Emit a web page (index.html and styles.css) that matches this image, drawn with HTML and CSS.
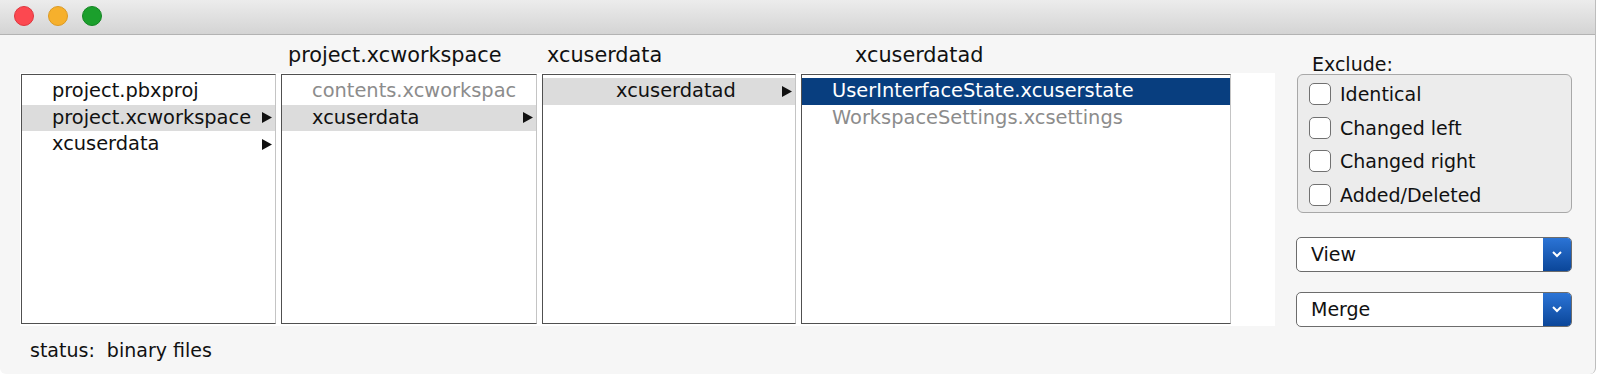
FILE: index.html
```html
<!DOCTYPE html>
<html lang="en">
<head>
    <meta charset="UTF-8">
    <meta name="viewport" content="width=device-width, initial-scale=1.0">
    <title>Directory Diff</title>
    <link rel="stylesheet" href="styles.css">
</head>
<body>
<div class="window">
    <div class="titlebar">
        <span class="light red"></span>
        <span class="light yellow"></span>
        <span class="light green"></span>
    </div>
    <div class="content">
        <div class="browser">
            <div class="headers">
                <div class="head"></div>
                <div class="head head-first">project.xcworkspace</div>
                <div class="head">xcuserdata</div>
                <div class="head head-wide">xcuserdatad</div>
            </div>
            <div class="lists">
                <div class="list">
                    <div class="item">project.pbxproj</div>
                    <div class="item hover">project.xcworkspace
                        <svg class="arrow" width="10" height="11" viewBox="0 0 10 11"><polygon points="0,0 10,5.5 0,11"/></svg>
                    </div>
                    <div class="item">xcuserdata
                        <svg class="arrow" width="10" height="11" viewBox="0 0 10 11"><polygon points="0,0 10,5.5 0,11"/></svg>
                    </div>
                </div>
                <div class="list">
                    <div class="item muted">contents.xcworkspac</div>
                    <div class="item hover">xcuserdata
                        <svg class="arrow" width="10" height="11" viewBox="0 0 10 11"><polygon points="0,0 10,5.5 0,11"/></svg>
                    </div>
                </div>
                <div class="list">
                    <div class="item hover indent">xcuserdatad
                        <svg class="arrow" width="10" height="11" viewBox="0 0 10 11"><polygon points="0,0 10,5.5 0,11"/></svg>
                    </div>
                </div>
                <div class="list">
                    <div class="item selected">UserInterfaceState.xcuserstate</div>
                    <div class="item muted">WorkspaceSettings.xcsettings</div>
                </div>
            </div>
            <div class="status">status:  binary files</div>
        </div>

        <div class="sidebar">
            <div class="group-title">Exclude:</div>
            <div class="group">
                <label class="check"><span class="box"></span>Identical</label>
                <label class="check"><span class="box"></span>Changed left</label>
                <label class="check"><span class="box"></span>Changed right</label>
                <label class="check"><span class="box"></span>Added/Deleted</label>
            </div>
            <div class="popup">
                <span class="popup-label">View</span>
                <span class="popup-arrow">
                    <svg width="10" height="7" viewBox="0 0 10 7"><polyline points="1,1 5,5 9,1" fill="none" stroke="#fff" stroke-width="2"/></svg>
                </span>
            </div>
            <div class="popup popup-merge">
                <span class="popup-label">Merge</span>
                <span class="popup-arrow">
                    <svg width="10" height="7" viewBox="0 0 10 7"><polyline points="1,1 5,5 9,1" fill="none" stroke="#fff" stroke-width="2"/></svg>
                </span>
            </div>
        </div>
    </div>
</div>
</body>
</html>
```

FILE: styles.css
```css
body {
    margin: 0;
    background: #ffffff;
    font-family: "DejaVu Sans", sans-serif;
    font-size: 19.4px;
    color: #111;
}
.window {
    width: 1596px;
    height: 374px;
    box-sizing: border-box;
    background: #f6f6f6;
    border-right: 1px solid #bdbdbd;
    border-radius: 0 0 6px 6px;
    overflow: hidden;
}

/* title bar */
.titlebar {
    height: 35px;
    box-sizing: border-box;
    border-bottom: 1px solid #b3b3b3;
    background: linear-gradient(#ececec, #d4d4d4);
    display: flex;
    align-items: center;
    gap: 14px;
    padding: 0 0 2px 14px;
}
.light {
    width: 20px;
    height: 20px;
    box-sizing: border-box;
    border-radius: 50%;
}
.red { background: #fc4850; border: 1px solid #de363e; }
.yellow { background: #f6b02c; border: 1px solid #dc9a23; }
.green { background: #1b9f2c; border: 1px solid #148523; }

.content {
    display: flex;
}

/* column browser */
.browser {
    margin-left: 20px;
    width: 1255px;
}
.headers, .lists {
    display: grid;
    grid-template-columns: 255px 256px 254px 430px;
    column-gap: 5px;
}
.headers {
    height: 38px;
    padding: 2px 0 0 1px;
    box-sizing: border-box;
    align-items: center;
    font-size: 20.8px;
}
.head {
    padding-left: 5px;
}
.head-first {
    padding-left: 7px;
}
.head-wide {
    padding-left: 54px;
}
.lists {
    height: 253px;
    box-sizing: border-box;
    padding: 1px 0 0 1px;
    background: #fff;
}
.list {
    height: 250px;
    box-sizing: border-box;
    border: 1px solid #505050;
    border-right-color: #c4c4c4;
    padding-top: 3px;
    background: #fff;
}
.item {
    height: 26.5px;
    line-height: 26.5px;
    padding: 0 3px 0 30px;
    display: flex;
    align-items: center;
    justify-content: space-between;
    white-space: nowrap;
}
.item.hover {
    background: #dcdcdc;
}
.item.indent {
    padding-left: 73px;
}
.item.selected {
    background: #083e7f;
    color: #fff;
}
.item.muted {
    color: #8c8c8c;
}
.arrow {
    flex: none;
    fill: #111;
}
.status {
    height: 48px;
    line-height: 48px;
    padding-left: 10px;
    white-space: pre;
    font-size: 19px;
}

/* right side controls */
.sidebar {
    margin-left: 21px;
    width: 276px;
    padding-top: 18px;
    font-size: 19px;
}
.group-title {
    height: 22px;
    line-height: 22px;
    padding-left: 16px;
    margin-bottom: -1px;
}
.group {
    margin-left: 1px;
    width: 275px;
    height: 139px;
    box-sizing: border-box;
    border: 1px solid #a8a8a8;
    border-radius: 6px;
    background: #ececec;
    padding-top: 2px;
}
.check {
    display: flex;
    align-items: center;
    height: 33.7px;
    padding-left: 11px;
}
.box {
    width: 22px;
    height: 22px;
    box-sizing: border-box;
    border: 1px solid #717171;
    border-radius: 5px;
    background: #fff;
    margin-right: 9px;
}
.popup {
    margin-top: 24px;
    height: 35px;
    box-sizing: border-box;
    border: 1px solid #6c6c6c;
    border-radius: 5px;
    background: #fff;
    display: flex;
    overflow: hidden;
}
.popup-merge {
    margin-top: 20px;
}
.popup-label {
    flex: 1;
    line-height: 33px;
    padding-left: 14px;
}
.popup-arrow {
    width: 28px;
    background: linear-gradient(#2b74d6, #0b4699);
    display: flex;
    align-items: center;
    justify-content: center;
}
```
